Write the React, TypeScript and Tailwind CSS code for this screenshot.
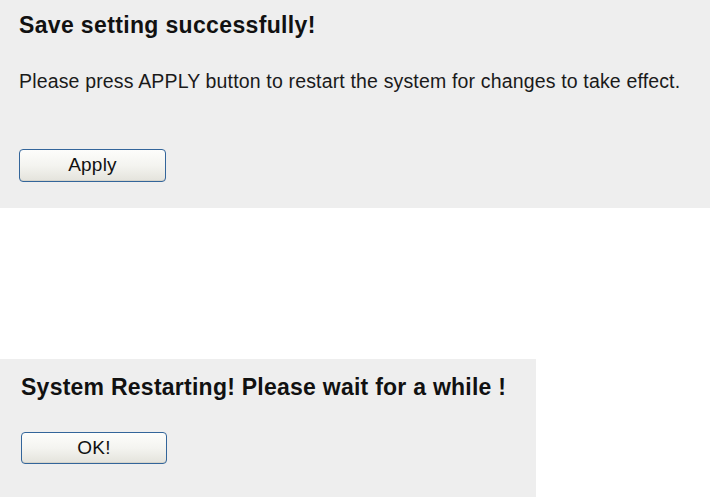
import React from 'react';

const font = { fontFamily: '"Liberation Sans", Arial, sans-serif' };

const XpButton: React.FC<{ label: string; className?: string }> = ({ label, className = '' }) => (
  <button
    type="button"
    className={`flex items-center justify-center rounded-[4px] border border-[#33659a] bg-gradient-to-b from-[#fdfdfb] via-[#f4f4f0] to-[#e4e3dc] text-[19px] tracking-[0.2px] text-[#111] shadow-[inset_0_-1px_0_#d6d4cb] ${className}`}
  >
    {label}
  </button>
);

export default function App() {
  return (
    <div className="min-h-[497px] w-[710px] bg-white text-black" style={font}>
      <section className="flex h-[208px] w-full flex-col bg-[#eeeeee] pl-[19px] pt-3">
        <h1 className="text-[23px] font-bold leading-[26px] tracking-[0.35px] text-[#111]">Save setting successfully!</h1>
        <p className="mt-8 text-[19.5px] leading-[22px] tracking-[0.16px] text-[#1a1a1a]">
          Please press APPLY button to restart the system for changes to take effect.
        </p>
        <XpButton label="Apply" className="mt-[57px] h-[33px] w-[147px]" />
      </section>

      <div className="h-[151px]" />

      <section className="flex h-[138px] w-[536px] flex-col bg-[#eeeeee] pl-[21px] pt-[15px]">
        <h2 className="text-[23px] font-bold leading-[26px] tracking-[0.25px] text-[#111]">System Restarting! Please wait for a while !</h2>
        <XpButton label="OK!" className="mt-[32px] h-[32px] w-[146px]" />
      </section>
    </div>
  );
}
